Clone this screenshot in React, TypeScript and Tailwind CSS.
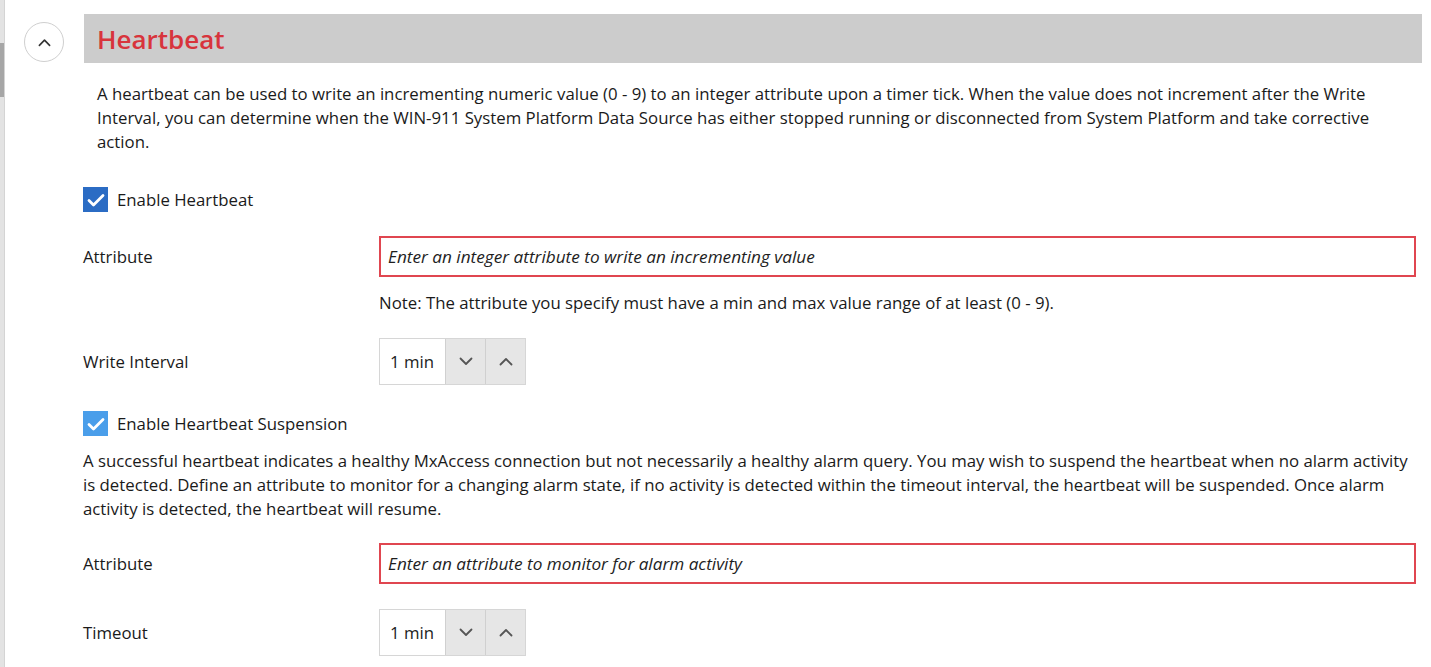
import React from 'react';

const font = { fontFamily: '"Open Sans", "Noto Sans", sans-serif' };

const Chevron = ({ up = false, className = '', color = '#555' }: { up?: boolean; className?: string; color?: string }) => (
  <svg width="14" height="9" viewBox="0 0 14 9" className={className} fill="none">
    <path
      d={up ? 'M1.5 7.5 L7 2 L12.5 7.5' : 'M1.5 1.5 L7 7 L12.5 1.5'}
      stroke={color}
      strokeWidth="1.8"
      strokeLinecap="round"
      strokeLinejoin="round"
    />
  </svg>
);

const Check = ({ light = false }: { light?: boolean }) => (
  <div
    className={`w-[25px] h-[25px] flex items-center justify-center shrink-0 ${
      light ? 'bg-[#4a9eea]' : 'bg-[#2b6cc4]'
    }`}
  >
    <svg width="18" height="14" viewBox="0 0 18 14" fill="none">
      <path d="M2 7.5 L6.5 12 L16 2.5" stroke="#fff" strokeWidth="2.8" strokeLinecap="round" strokeLinejoin="round" />
    </svg>
  </div>
);

const Spinner = () => (
  <div className="flex h-[47px] w-[147px] border border-[#d6d6d6]">
    <div className="w-[65px] bg-white flex items-center pl-[10px] text-[16.8px] text-[#222]">1 min</div>
    <div className="w-[40px] bg-[#e6e6e6] border-l border-[#d0d0d0] flex items-center justify-center">
      <Chevron />
    </div>
    <div className="flex-1 bg-[#e6e6e6] border-l border-[#d0d0d0] flex items-center justify-center">
      <Chevron up />
    </div>
  </div>
);

const TextInput = ({ placeholder }: { placeholder: string }) => (
  <div className="flex-1 h-[41px] border-2 border-[#e04650] flex items-center pl-[7px] text-[17.2px] italic text-[#1e1e1e]">
    {placeholder}
  </div>
);

export default function App() {
  return (
    <div className="flex min-h-[667px] bg-white text-[#1a1a1a] text-[16.8px]" style={font}>
      {/* scroll rail */}
      <div className="w-[5px] shrink-0 bg-[#e3e3e3] border-r border-[#d4d4d4] flex flex-col">
        <div className="h-[43px]" />
        <div className="h-[54px] bg-[#a6a6a6]" />
      </div>

      <div className="w-[79px] shrink-0 pt-[22px] pl-[19px]">
        <div className="w-[40px] h-[40px] rounded-full border border-[#cfcfcf] flex items-center justify-center">
          <Chevron up color="#333" className="w-[13px]" />
        </div>
      </div>

      <div className="flex-1 pt-[14px] pr-[9px]">
        <div className="h-[49px] bg-[#cccccc] flex items-center pl-[13px]">
          <h1 className="text-[26px] font-semibold text-[#d8343c] leading-none">Heartbeat</h1>
        </div>

        <div className="pr-[6px]">
          <p className="mt-[19px] pl-[13px] pr-[20px] leading-[24px]">
            A heartbeat can be used to write an incrementing numeric value (0 - 9) to an integer attribute upon a timer tick. When the value does not increment after the Write Interval, you can determine when the WIN-911 System Platform Data Source has either stopped running or disconnected from System Platform and take corrective action.
          </p>

          <label className="mt-[33px] flex items-center gap-[9px] -ml-px">
            <Check />
            <span>Enable Heartbeat</span>
          </label>

          <div className="mt-[24px] flex items-center -ml-px">
            <span className="w-[296px]">Attribute</span>
            <TextInput placeholder="Enter an integer attribute to write an incrementing value" />
          </div>
          <p className="mt-[14px] pl-[295px] leading-[24px]">
            Note: The attribute you specify must have a min and max value range of at least (0 - 9).
          </p>

          <div className="mt-[23px] flex items-center -ml-px">
            <span className="w-[296px]">Write Interval</span>
            <Spinner />
          </div>

          <label className="mt-[26px] flex items-center gap-[9px] -ml-px">
            <Check light />
            <span>Enable Heartbeat Suspension</span>
          </label>

          <p className="mt-[13px] leading-[24px] -ml-px">
            A successful heartbeat indicates a healthy MxAccess connection but not necessarily a healthy alarm query. You may wish to suspend the heartbeat when no alarm activity is detected. Define an attribute to monitor for a changing alarm state, if no activity is detected within the timeout interval, the heartbeat will be suspended. Once alarm activity is detected, the heartbeat will resume.
          </p>

          <div className="mt-[22px] flex items-center -ml-px">
            <span className="w-[296px]">Attribute</span>
            <TextInput placeholder="Enter an attribute to monitor for alarm activity" />
          </div>

          <div className="mt-[25px] flex items-center -ml-px">
            <span className="w-[296px]">Timeout</span>
            <Spinner />
          </div>
        </div>
      </div>
    </div>
  );
}
